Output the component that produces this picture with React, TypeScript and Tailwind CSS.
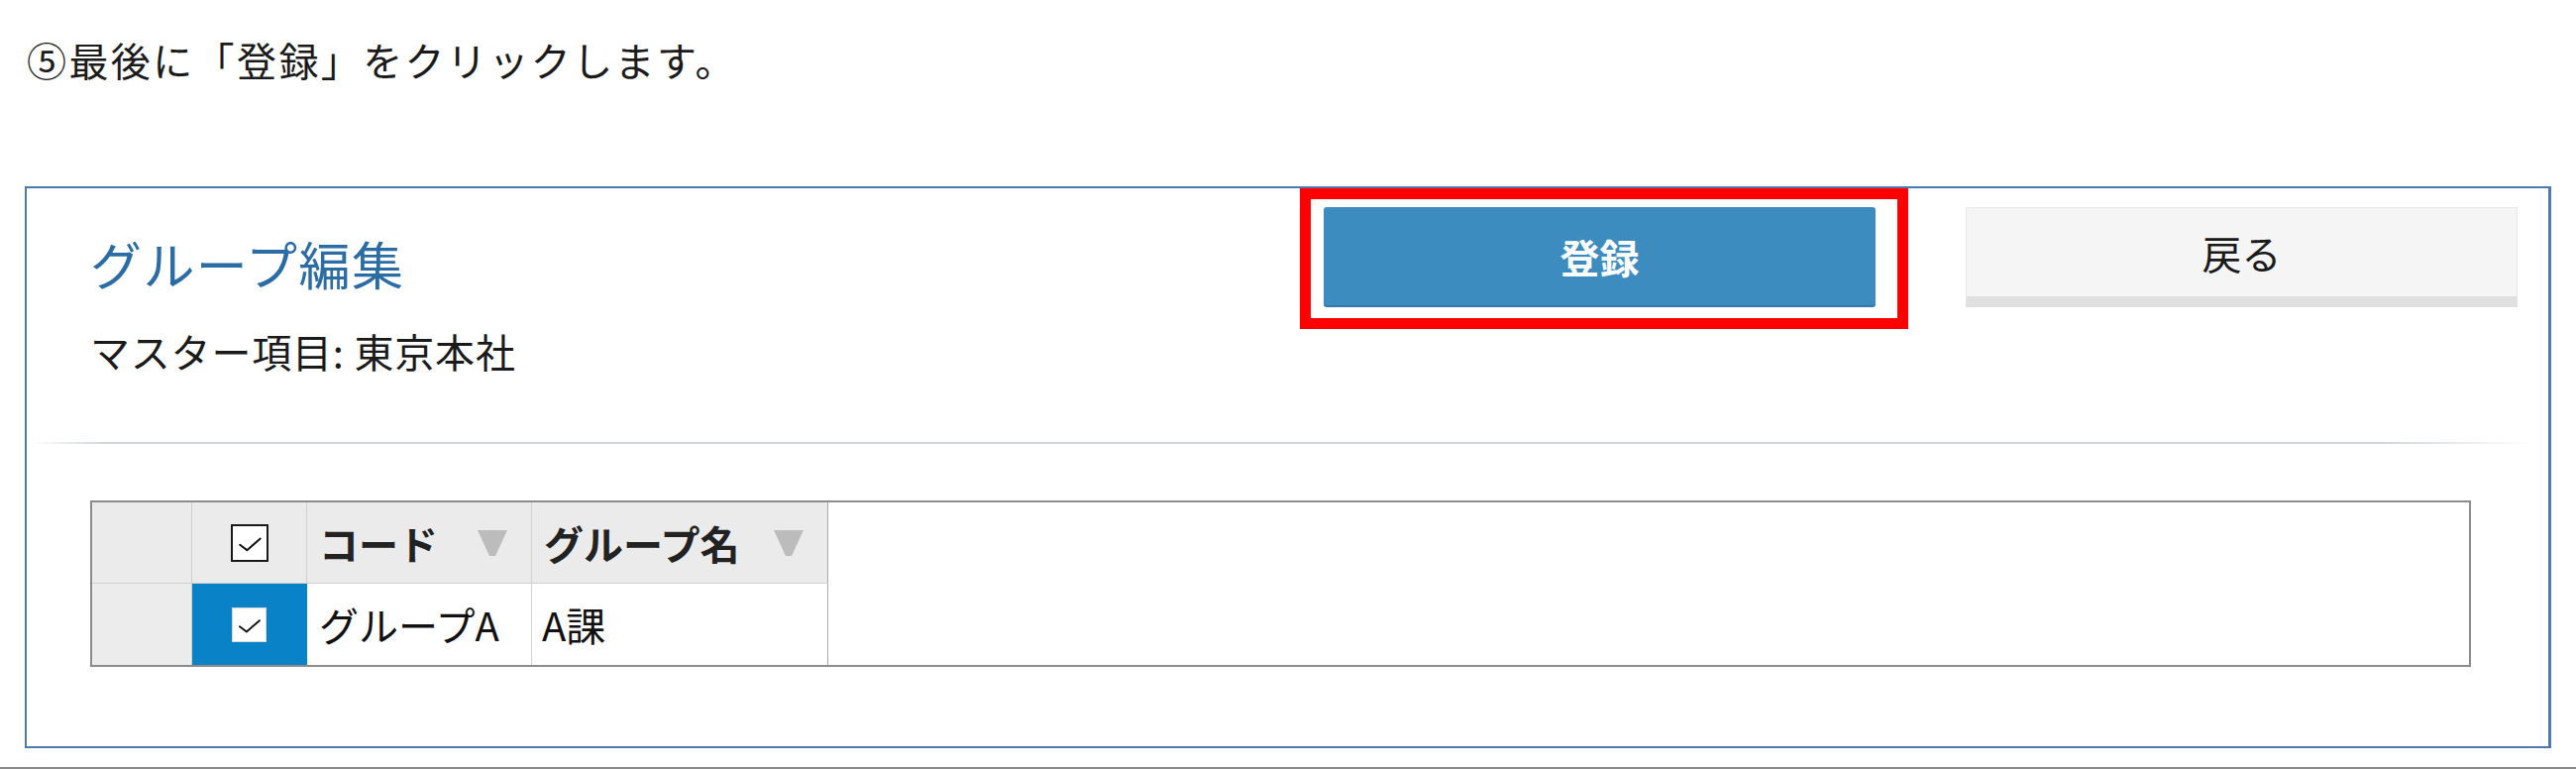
import React from "react";

function CheckBox({ strong }: { strong?: boolean }) {
  return (
    <div
      className={`flex items-center justify-center bg-white ${
        strong ? "h-[38px] w-[38px] border-2 border-[#1a1a1a]" : "h-[35px] w-[35px] border border-[#d8d8d8]"
      }`}
    >
      <svg viewBox="0 0 38 38" className="h-full w-full">
        <path d="M8 21 L16 27 L31 14" fill="none" stroke="#111" strokeWidth="2.2" strokeLinecap="round" strokeLinejoin="round" />
      </svg>
    </div>
  );
}

function Funnel() {
  return (
    <svg viewBox="0 0 30 26" className="h-[26px] w-[30px]">
      <path d="M0 0 H30 L18 26 H12 Z" fill="#bcbcbc" />
    </svg>
  );
}

function HeadCell({ label, width }: { label: string; width: string }) {
  return (
    <div className={`flex items-center justify-between border-r border-[#d0d0d0] pl-3 pr-6 ${width}`}>
      <span className="text-[40px] font-bold leading-none text-[#222]">{label}</span>
      <Funnel />
    </div>
  );
}

function GroupTable() {
  return (
    <div className="ml-[64px] mt-[57px] flex w-[2403px] border-2 border-[#8c8c8c]">
      <div className="flex flex-col">
        {/* ヘッダー行 */}
        <div className="flex h-[82px] border-b border-[#d0d0d0] bg-[#ebebeb]">
          <div className="w-[101px] border-r border-[#d0d0d0]" />
          <div className="flex w-[116px] items-center justify-center border-r border-[#d0d0d0]">
            <CheckBox strong />
          </div>
          <HeadCell label="コード" width="w-[227px]" />
          <HeadCell label="グループ名" width="w-[299px] !border-[#a8a8a8]" />
        </div>
        {/* データ行 */}
        <div className="flex h-[82px] bg-white text-[40px] leading-none text-[#111]">
          <div className="w-[101px] border-r border-[#d0d0d0] bg-[#ececec]" />
          <div className="flex w-[116px] items-center justify-center border-r border-[#0a80c4] bg-[#0a82c8]">
            <CheckBox />
          </div>
          <div className="flex w-[227px] items-center border-r border-[#d0d0d0] pl-3">グループA</div>
          <div className="flex w-[299px] items-center border-r border-[#a8a8a8] pl-[10px]">A課</div>
        </div>
      </div>
      <div className="flex-1" />
    </div>
  );
}

export default function App() {
  return (
    <div className="relative h-[776px] w-[2600px] overflow-hidden bg-white font-['Noto_Sans_CJK_JP','Noto_Sans',sans-serif]">
      <p className="pl-[27px] pt-[40px] text-[40px] leading-[40px] tracking-[2.4px] text-[#1a1a1a]">⑤最後に「登録」をクリックします。</p>

      <div className="ml-[25px] mt-[108px] h-[567px] w-[2550px] border-2 border-r-[3px] border-[#4e79ad]">
        <div className="flex justify-between">
          <div className="pl-[64px] pt-[50px]">
            <h1 className="text-[52px] font-normal leading-[52px] tracking-[1.4px] text-[#2c6ca4]">グループ編集</h1>
            <p className="mt-[42px] text-[40px] leading-[40px] tracking-[0.8px] text-[#1a1a1a]">マスター項目: 東京本社</p>
          </div>
          <div className="flex gap-[91px] pr-[31px] pt-[19px]">
            <button className="flex h-[101px] w-[557px] items-center justify-center rounded-[3px] border-b-2 border-[#3479a8] bg-[#3d8cbf] text-[40px] font-bold text-white">
              登録
            </button>
            <button className="flex h-[101px] w-[557px] items-center justify-center border border-b-[11px] border-[#e8e8e8] border-b-[#e0e0e0] bg-[#f5f5f5] text-[40px] text-[#1a1a1a]">
              戻る
            </button>
          </div>
        </div>

        <div className="ml-[3px] mr-[13px] mt-[72px] h-[2px] bg-[linear-gradient(to_right,transparent,#d2d6da_3%,#d2d6da_94%,transparent)]" />

        <GroupTable />
      </div>

      <div className="mt-[19px] h-[2px] bg-[#8a8a8a]" />

      {/* 注釈の赤枠 */}
      <div className="absolute left-[1312px] top-[190px] h-[142px] w-[614px] border-[11px] border-[#ff0000]" />
    </div>
  );
}
